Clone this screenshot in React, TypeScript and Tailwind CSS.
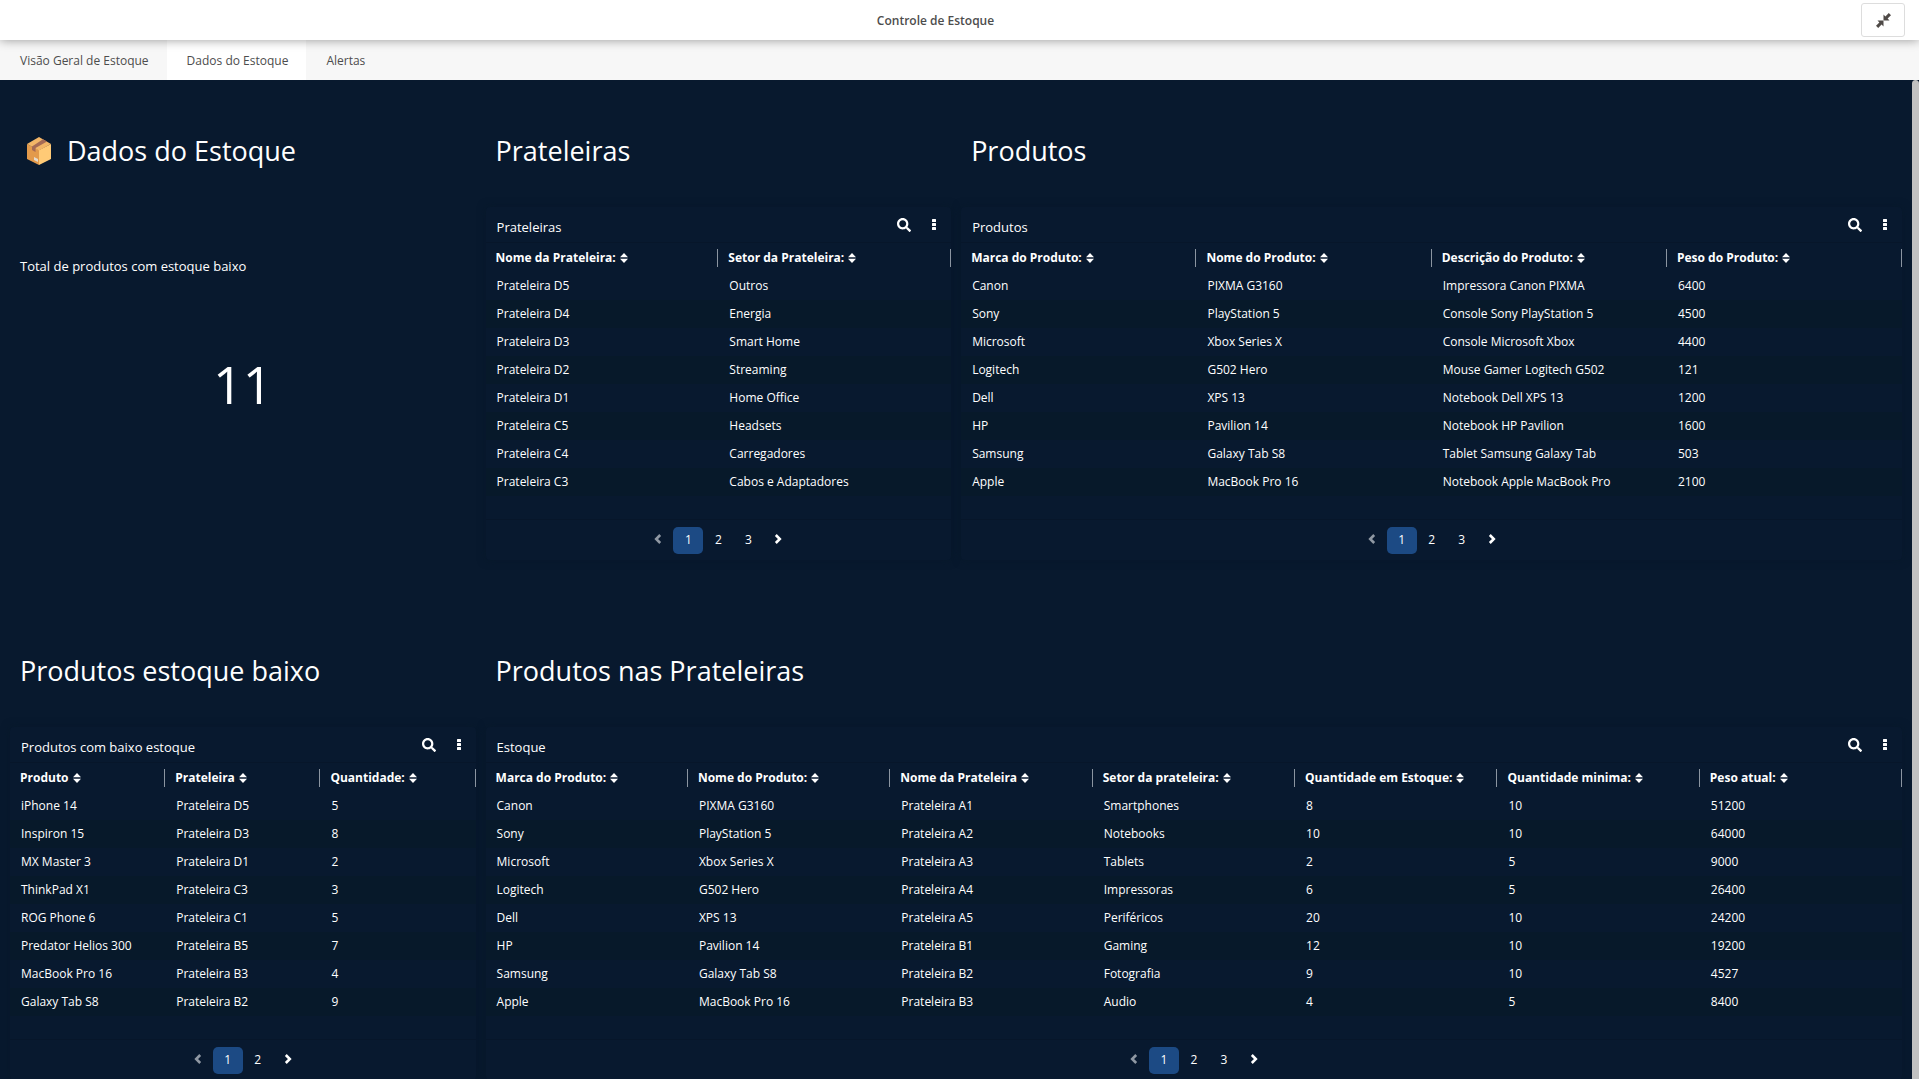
import type { ReactNode } from "react";
import { FaSearch } from "react-icons/fa";

type Row = string[];

const tabs = ["Visão Geral de Estoque", "Dados do Estoque", "Alertas"];

const shelves = {
  columns: ["Nome da Prateleira:", "Setor da Prateleira:"],
  rows: [
    ["Prateleira D5", "Outros"],
    ["Prateleira D4", "Energia"],
    ["Prateleira D3", "Smart Home"],
    ["Prateleira D2", "Streaming"],
    ["Prateleira D1", "Home Office"],
    ["Prateleira C5", "Headsets"],
    ["Prateleira C4", "Carregadores"],
    ["Prateleira C3", "Cabos e Adaptadores"],
  ],
};

const products = {
  columns: ["Marca do Produto:", "Nome do Produto:", "Descrição do Produto:", "Peso do Produto:"],
  rows: [
    ["Canon", "PIXMA G3160", "Impressora Canon PIXMA", "6400"],
    ["Sony", "PlayStation 5", "Console Sony PlayStation 5", "4500"],
    ["Microsoft", "Xbox Series X", "Console Microsoft Xbox", "4400"],
    ["Logitech", "G502 Hero", "Mouse Gamer Logitech G502", "121"],
    ["Dell", "XPS 13", "Notebook Dell XPS 13", "1200"],
    ["HP", "Pavilion 14", "Notebook HP Pavilion", "1600"],
    ["Samsung", "Galaxy Tab S8", "Tablet Samsung Galaxy Tab", "503"],
    ["Apple", "MacBook Pro 16", "Notebook Apple MacBook Pro", "2100"],
  ],
};

const lowStock = {
  columns: ["Produto", "Prateleira", "Quantidade:"],
  rows: [
    ["iPhone 14", "Prateleira D5", "5"],
    ["Inspiron 15", "Prateleira D3", "8"],
    ["MX Master 3", "Prateleira D1", "2"],
    ["ThinkPad X1", "Prateleira C3", "3"],
    ["ROG Phone 6", "Prateleira C1", "5"],
    ["Predator Helios 300", "Prateleira B5", "7"],
    ["MacBook Pro 16", "Prateleira B3", "4"],
    ["Galaxy Tab S8", "Prateleira B2", "9"],
  ],
};

const stock = {
  columns: [
    "Marca do Produto:",
    "Nome do Produto:",
    "Nome da Prateleira",
    "Setor da prateleira:",
    "Quantidade em Estoque:",
    "Quantidade minima:",
    "Peso atual:",
  ],
  rows: [
    ["Canon", "PIXMA G3160", "Prateleira A1", "Smartphones", "8", "10", "51200"],
    ["Sony", "PlayStation 5", "Prateleira A2", "Notebooks", "10", "10", "64000"],
    ["Microsoft", "Xbox Series X", "Prateleira A3", "Tablets", "2", "5", "9000"],
    ["Logitech", "G502 Hero", "Prateleira A4", "Impressoras", "6", "5", "26400"],
    ["Dell", "XPS 13", "Prateleira A5", "Periféricos", "20", "10", "24200"],
    ["HP", "Pavilion 14", "Prateleira B1", "Gaming", "12", "10", "19200"],
    ["Samsung", "Galaxy Tab S8", "Prateleira B2", "Fotografia", "9", "10", "4527"],
    ["Apple", "MacBook Pro 16", "Prateleira B3", "Audio", "4", "5", "8400"],
  ],
};

function PackageIcon() {
  return (
    <svg viewBox="0 0 24 28" className="ml-[7px] h-7 w-6 shrink-0" aria-hidden="true">
      <path d="M0 7 L12 13 V28 L0 22 Z" fill="#e39a4b" />
      <path d="M24 7 L12 13 V28 L24 22 Z" fill="#ffca76" />
      <path d="M12 0 L24 7 L12 13.500 L0 7 Z" fill="#f2b567" />
      <path d="M16 2.300 L20 4.600 L8.500 11 V15 L5 13 V9.500 Z" fill="#a56a55" />
      <path d="M7 20 L11 22 V25 L7 23 Z" fill="#e4dccf" />
    </svg>
  );
}

function CompressIcon() {
  return (
    <svg viewBox="0 0 15 15" className="size-[15px]" fill="#4f4a47" aria-hidden="true">
      <path d="M7.500 7.500 V1.500 L9.400 3.400 L12.800 0 L15 2.200 L11.600 5.600 L13.500 7.500 Z" />
      <path d="M7.500 7.500 V13.500 L5.600 11.600 L2.200 15 L0 12.800 L3.400 9.400 L1.500 7.500 Z" />
    </svg>
  );
}

function SortIcon() {
  return (
    <svg viewBox="0 0 8 10" className="h-2.5 w-2" fill="currentColor" aria-hidden="true">
      <path d="M4 0 L8 4.200 H0 Z" />
      <path d="M4 10 L8 5.800 H0 Z" />
    </svg>
  );
}

function DotsIcon() {
  return (
    <svg viewBox="0 0 4 12" className="h-3 w-1" fill="currentColor" aria-hidden="true">
      <rect x="0" y="0" width="4" height="3" rx="0.500" />
      <rect x="0" y="4" width="4" height="3" rx="0.500" />
      <rect x="0" y="8" width="4" height="3" rx="0.500" />
    </svg>
  );
}

function Chevron({ direction }: { direction: "left" | "right" }) {
  return (
    <svg viewBox="0 0 8 10" className="mb-0.5 h-2.5 w-2" fill="none" stroke="currentColor" strokeWidth="2.600" aria-hidden="true">
      <path d={direction === "left" ? "M6.200 1 L2.200 5 L6.200 9" : "M1.800 1 L5.800 5 L1.800 9"} />
    </svg>
  );
}

function Heading({ children, icon }: { children: string; icon?: ReactNode }) {
  return (
    <h2 className="flex h-[119px] items-center gap-4 px-2.5 pt-[7px] text-[27px] leading-9">
      {icon}
      {children}
    </h2>
  );
}

function Pagination({ pages }: { pages: number }) {
  return (
    <nav aria-label="Paginação" className="flex h-[41px] items-center justify-center border-t border-[#07162a] text-xs">
      <button aria-label="Anterior" className="flex h-[27px] w-[30px] items-center justify-center text-[#8f98a3]">
        <Chevron direction="left" />
      </button>
      {Array.from({ length: pages }, (_, i) => (
        <button
          key={i}
          className={
            i === 0 ? "h-[27px] w-[30px] rounded-[5px] bg-[#1c4a84]" : "h-[27px] w-[30px] rounded-[5px]"
          }
        >
          {i + 1}
        </button>
      ))}
      <button aria-label="Próxima" className="flex h-[27px] w-[30px] items-center justify-center">
        <Chevron direction="right" />
      </button>
    </nav>
  );
}

function TableCard({ title, columns, rows, pages }: { title: string; columns: string[]; rows: Row[]; pages: number }) {
  return (
    <section className="rounded bg-[#08192f] shadow-[0_0_8px_#07182a]">
      <header className="flex h-9 items-center justify-between border-b border-[#07162a] pr-0.5 pl-[11px]">
        <h3 className="pt-1.5 text-[13px]">{title}</h3>
        <div className="flex items-center">
          <button aria-label="Pesquisar" className="flex h-7 w-[30px] items-center justify-center">
            <FaSearch className="size-3.5" />
          </button>
          <button aria-label="Mais opções" className="flex h-7 w-[30px] items-center justify-center">
            <DotsIcon />
          </button>
        </div>
      </header>
      <table className="w-full table-fixed border-collapse text-left">
        <thead>
          <tr className="h-[29px]">
            {columns.map((c) => (
              <th key={c} scope="col" className="p-0 text-xs font-bold">
                <div className="flex h-[18px] items-center gap-1 border-r border-[#8b95a1] pl-2.5 whitespace-nowrap">
                  {c}
                  <button aria-label={"Ordenar por " + c}>
                    <SortIcon />
                  </button>
                </div>
              </th>
            ))}
          </tr>
        </thead>
        <tbody>
          {rows.map((r, i) => (
            <tr key={i} className="h-7 even:bg-[#07192a]">
              {r.map((v, j) => (
                <td key={j} className="truncate py-0 pr-2 pl-[11px] text-xs">
                  {v}
                </td>
              ))}
            </tr>
          ))}
        </tbody>
      </table>
      <div className="h-[23px]" />
      <Pagination pages={pages} />
    </section>
  );
}

export default function App() {
  return (
    <div className="flex h-screen flex-col overflow-hidden bg-[#08192e] font-['Open_Sans','Noto_Sans',sans-serif] text-white">
      <header className="z-10 flex h-10 shrink-0 items-center bg-white pr-3.5 pl-2.5 text-[#4d4d4d] shadow-[0_0_10px_rgba(0,0,0,0.4)]">
        <h1 className="grow pt-0.5 text-center text-xs font-semibold">Controle de Estoque</h1>
        <button
          aria-label="Sair da tela cheia"
          className="flex h-[34px] w-11 items-center justify-center rounded-[3px] border border-[#ddd]"
        >
          <CompressIcon />
        </button>
      </header>
      <nav aria-label="Painéis" className="flex h-10 shrink-0 bg-[#f7f7f7] text-xs text-[#4d4d4d]">
        {tabs.map((t, i) => (
          <button key={t} className={i === 1 ? "bg-white pt-0.5 pr-[18px] pl-5" : "pt-0.5 pr-[18px] pl-5"}>
            {t}
          </button>
        ))}
      </nav>
      <div className="flex min-h-0 grow">
        <main className="grid min-w-0 grow grid-cols-4 content-start gap-x-2.5 gap-y-12 overflow-hidden px-2.5 pt-2">
          <div>
            <Heading icon={<PackageIcon />}>Dados do Estoque</Heading>
            <section className="px-2.5 pt-[50px]">
              <h3 className="text-[13px]">Total de produtos com estoque baixo</h3>
              <p className="pt-[68px] text-center text-[52px]">11</p>
            </section>
          </div>
          <div>
            <Heading>Prateleiras</Heading>
            <TableCard title="Prateleiras" {...shelves} pages={3} />
          </div>
          <div className="col-span-2">
            <Heading>Produtos</Heading>
            <TableCard title="Produtos" {...products} pages={3} />
          </div>
          <div>
            <Heading>Produtos estoque baixo</Heading>
            <TableCard title="Produtos com baixo estoque" {...lowStock} pages={2} />
          </div>
          <div className="col-span-3">
            <Heading>Produtos nas Prateleiras</Heading>
            <TableCard title="Estoque" {...stock} pages={3} />
          </div>
        </main>
        <div className="w-[7px] shrink-0 rounded-t bg-[#c1c1c1]" />
      </div>
    </div>
  );
}
